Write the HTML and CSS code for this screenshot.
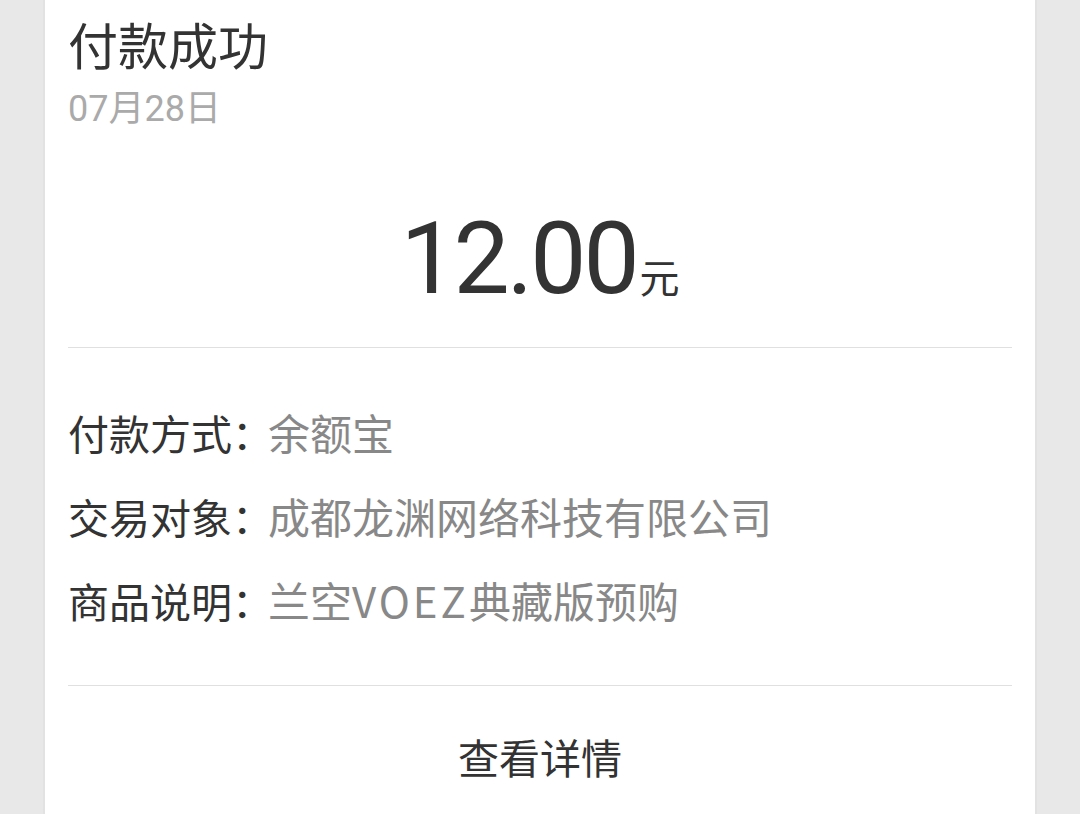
FILE: index.html
```html
<!DOCTYPE html>
<html lang="zh-CN">
<head>
    <meta charset="UTF-8">
    <meta name="viewport" content="width=device-width, initial-scale=1.0">
    <title>付款成功</title>
    <link rel="stylesheet" href="styles.css">
</head>
<body>
    <div class="card">
        <div class="header">
            <h1 class="title">付款成功</h1>
            <p class="date">07月28日</p>
        </div>

        <div class="amount">
            <span class="amount-num">12.00</span><span class="amount-unit">元</span>
        </div>

        <div class="info">
            <div class="row"><span class="label">付款方式：</span><span class="value">余额宝</span></div>
            <div class="row"><span class="label">交易对象：</span><span class="value">成都龙渊网络科技有限公司</span></div>
            <div class="row"><span class="label">商品说明：</span><span class="value">兰空<span class="latin">VOEZ</span>典藏版预购</span></div>
        </div>

        <div class="more">查看详情</div>
    </div>
</body>
</html>
```

FILE: styles.css
```css
body {
    margin: 0;
    background-color: #e8e8e8;
    font-family: "Noto Sans CJK SC", "Noto Sans", sans-serif;
    color: #333;
    height: 814px;
    overflow: hidden;
}

.card {
    margin: 0 43px 0 43px;
    padding: 0 23px;
    background-color: #fff;
    border-left: 2px solid #e2e2e2;
    border-right: 2px solid #e2e2e2;
    height: 814px;
}

.header {
    padding-top: 13px;
}

.title {
    margin: 0;
    font-size: 50px;
    font-weight: normal;
    line-height: 60px;
    color: #333;
}

.date {
    margin: 16px 0 0;
    font-family: Roboto, "Noto Sans CJK SC", sans-serif;
    font-size: 36px;
    line-height: 40px;
    color: #aaa;
}

.amount {
    display: flex;
    justify-content: center;
    align-items: baseline;
    padding: 80px 0 38px;
    border-bottom: 1px solid #e0e0e0;
    color: #333;
}

.amount-num {
    font-family: Roboto, "Noto Sans", sans-serif;
    font-size: 100px;
    line-height: 100px;
    letter-spacing: -3px;
}

.amount-unit {
    font-size: 40px;
    line-height: 40px;
    margin-left: 3px;
}

.info {
    padding: 42px 0 43px;
    border-bottom: 1px solid #e0e0e0;
}

.row {
    font-size: 41px;
    line-height: 83px;
    white-space: nowrap;
}

.label {
    display: inline-block;
    width: 200px;
    color: #333;
}

.value {
    font-size: 42px;
    color: #888;
}

.latin {
    letter-spacing: 3px;
}

.more {
    text-align: center;
    font-size: 41px;
    line-height: 140px;
    color: #333;
}
```
